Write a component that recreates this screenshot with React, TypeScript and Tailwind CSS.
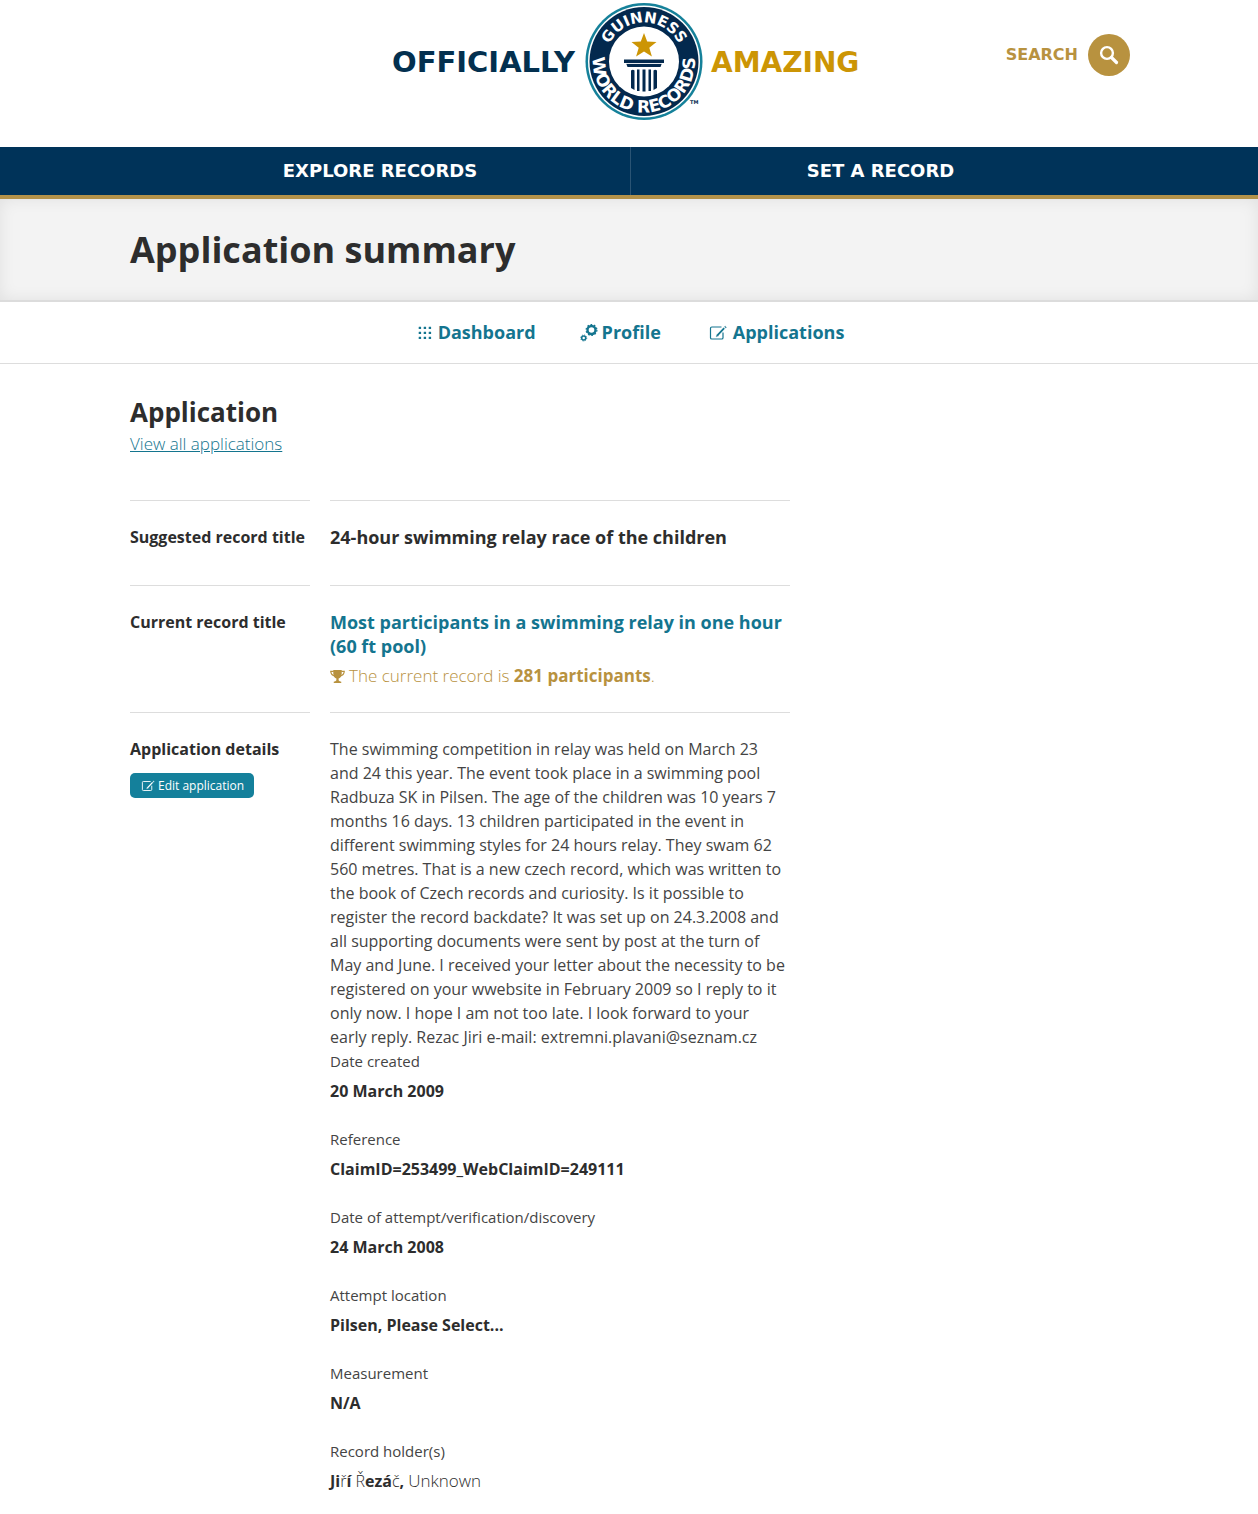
import type { ReactNode } from 'react';

type IconProps = {
  className?: string;
};

type DetailItem = {
  label: string;
  value: ReactNode;
};

const details: DetailItem[] = [
  { label: 'Date created', value: '20 March 2009' },
  { label: 'Reference', value: 'ClaimID=253499_WebClaimID=249111' },
  { label: 'Date of attempt/verification/discovery', value: '24 March 2008' },
  { label: 'Attempt location', value: 'Pilsen, Please Select...' },
  { label: 'Measurement', value: 'N/A' },
  {
    label: 'Record holder(s)',
    value: (
      <>
        Ji<span className="font-light">ř</span>í <span className="font-light">Ř</span>ezá
        <span className="font-light">č</span>, <span className="text-[17px] font-light">Unknown</span>
      </>
    ),
  },
];

function GridIcon({ className }: IconProps) {
  return (
    <svg viewBox="0 0 14 14" className={className} fill="currentColor" aria-hidden="true">
      {[0, 5, 10].map((x) =>
        [0, 5, 10].map((y) => <rect key={`${x}-${y}`} x={x + 0.7} y={y + 0.7} width="2.4" height="2.4" rx="0.3" />)
      )}
    </svg>
  );
}

function CogsIcon({ className }: IconProps) {
  return (
    <svg viewBox="0 0 18 18" className={className} fill="none" stroke="currentColor" aria-hidden="true">
      <circle cx="11.5" cy="6" r="4" strokeWidth="2.4" />
      <circle cx="11.5" cy="6" r="5.4" strokeWidth="1.2" strokeDasharray="1.7 1.7" />
      <circle cx="3.7" cy="14" r="2" strokeWidth="1.5" />
      <circle cx="3.7" cy="14" r="3" strokeWidth="0.9" strokeDasharray="1.18 1.18" />
    </svg>
  );
}

function EditIcon({ className }: IconProps) {
  return (
    <svg viewBox="0 0 18 16" className={className} fill="none" stroke="currentColor" aria-hidden="true">
      <path d="M12.5 2H2.8Q1.5 2 1.5 3.3V12.7Q1.5 14 2.8 14H12.7Q14 14 14 12.7V7.5" strokeWidth="1.2" />
      <path d="M15.2 3.2L8.6 10.2" strokeWidth="1.8" />
      <path d="M7.2 11.8L7.9 9.4L9.5 10.8Z M15.4 1.8L16.8 3.1L17.4 2.2L16.3 1.2Z" fill="currentColor" strokeWidth="0.3" />
    </svg>
  );
}

function TrophyIcon({ className }: IconProps) {
  return (
    <svg viewBox="0 0 16 15" className={className} fill="currentColor" aria-hidden="true">
      <path d="M3.5 0.5H12.5V4.5C12.5 7.5 10.8 9 9.2 9.6V11.5C9.6 12.4 11 12.8 12 13V14.5H4V13C5 12.8 6.4 12.4 6.8 11.5V9.6C5.2 9 3.5 7.5 3.5 4.5Z" />
      <path d="M4 2H0.8Q1 6.5 5.5 7M12 2H15.2Q15 6.5 10.5 7" fill="none" stroke="currentColor" strokeWidth="1.3" />
    </svg>
  );
}

function SearchIcon({ className }: IconProps) {
  return (
    <svg viewBox="0 0 20 20" className={className} fill="none" stroke="currentColor" aria-hidden="true">
      <circle cx="8" cy="8" r="5.9" strokeWidth="2.4" />
      <path d="M12.5 12.5L17.5 17.5" strokeWidth="3.2" strokeLinecap="round" />
    </svg>
  );
}

function Logo() {
  return (
    <svg
      viewBox="4 0 470 120"
      className="w-[470px] max-w-full overflow-visible font-['DejaVu_Sans',sans-serif] font-bold"
      role="img"
      aria-label="Officially Amazing, Guinness World Records">
      <defs>
        <path id="ring-top" d="M214 61.5A39 39 0 0 1 292 61.5" />
        <path id="ring-bottom" d="M205.1 44.1A51 51 0 1 0 300.9 44.1" />
      </defs>
      <text x="1" y="72" fontSize="29" fill="#03304f">OFFICIALLY</text>
      <text x="320" y="72" fontSize="28" fill="#cc9505">AMAZING</text>
      <circle cx="253" cy="61.5" r="58.5" fill="#15819a" />
      <circle cx="253" cy="61.5" r="56" fill="#fff" />
      <circle cx="253" cy="61.5" r="54.5" fill="#03294e" />
      <circle cx="253" cy="61.5" r="35" fill="#fff" />
      <g fill="#fff" textAnchor="middle">
        <text fontSize="15">
          <textPath href="#ring-top" startOffset="50%">GUINNESS</textPath>
        </text>
        <text fontSize="17">
          <textPath href="#ring-bottom" startOffset="50%">WORLD RECORDS</textPath>
        </text>
      </g>
      <path d="M253 33L256.2 41.5L265.5 42L258.3 47.7L260.9 56.5L253 51.5L245.1 56.5L247.7 47.7L240.5 42L249.8 41.5Z" fill="#cc9505" />
      <path d="M233 59.5H273V63H271L269.5 67H236.5L235 63H233Z" fill="#03294e" />
      <path d="M234.5 63.5H271.5" stroke="#fff" strokeWidth="0.9" />
      <path d="M240 70.5Q242 69 243.5 70.5V90L240 88ZM246 69.5H248.5V91H246ZM251.5 69.5H254.5V91.5H251.5ZM257.5 69.5H260V91H257.5ZM262.5 70.5Q264 69 266 70.5V88L262.5 90Z" fill="#03294e" />
      <text x="299" y="104" fontSize="5" fill="#03294e">TM</text>
    </svg>
  );
}

function Row({ title, action, children }: { title: string; action?: ReactNode; children: ReactNode }) {
  return (
    <section className="grid grid-cols-[180px_minmax(0,460px)] gap-5">
      <div className="border-t border-[#ddd] pt-6">
        <h3 className="text-base leading-6 font-bold">{title}</h3>
        {action}
      </div>
      <div className="border-t border-[#ddd] pt-6">{children}</div>
    </section>
  );
}

export default function App() {
  return (
    <div className="bg-white font-['Open_Sans',sans-serif] text-base leading-6 text-[#2d2d2d]">
      <header className="pl-0.5">
        <div className="mx-auto grid h-[147px] max-w-[1000px] grid-cols-[1fr_470px_1fr] items-start">
          <a href="#home" className="col-start-2">
            <Logo />
          </a>
          <button
            type="button"
            className="mt-[34px] flex items-center gap-2.5 justify-self-end font-['DejaVu_Sans',sans-serif] text-base font-bold text-[#b8923f]">
            SEARCH
            <span className="flex size-[42px] items-center justify-center rounded-full bg-[#b8923f] text-white">
              <SearchIcon className="size-5" />
            </span>
          </button>
        </div>
      </header>

      <nav aria-label="Main" className="border-b-4 border-[#b3924a] bg-[#003359] pl-0.5">
        <div className="mx-auto grid h-12 max-w-[1000px] grid-cols-2 text-center font-['DejaVu_Sans',sans-serif] text-lg leading-[48px] font-bold text-white">
          <a href="#explore">EXPLORE RECORDS</a>
          <a href="#set" className="border-l border-[#2a5474]">SET A RECORD</a>
        </div>
      </nav>

      <div className="border-b-2 border-[#dcdcdc] bg-[#f3f3f3] pt-[26px] pb-[25px] pl-0.5 shadow-[inset_0_0_16px_rgba(0,0,0,0.08)]">
        <h1 className="mx-auto max-w-[1000px] text-4xl leading-[50px] font-bold">Application summary</h1>
      </div>

      <nav
        aria-label="Account"
        className="flex justify-center border-b border-[#ddd] py-[18px] pl-1 text-lg leading-[25px] font-bold text-[#14758f]">
        <a href="#dashboard" className="flex items-center gap-1.5">
          <GridIcon className="size-3.5" />
          Dashboard
        </a>
        <a href="#profile" className="ml-11 flex items-center gap-1">
          <CogsIcon className="size-[18px]" />
          Profile
        </a>
        <a href="#applications" className="ml-12 flex items-center gap-1.5">
          <EditIcon className="h-4 w-[18px]" />
          Applications
        </a>
      </nav>

      <main className="pl-0.5">
        <div className="mx-auto max-w-[1000px] pt-8">
          <h2 className="text-[26px] leading-8 font-bold">Application</h2>
          <a href="#all" className="mt-1 inline-block text-[17px] font-light text-[#14758f] underline">
            View all applications
          </a>

          <div className="mt-11">
            <Row title="Suggested record title">
              <p className="pb-9 text-lg leading-6 font-bold">24-hour swimming relay race of the children</p>
            </Row>
            <Row title="Current record title">
              <a href="#record" className="block text-lg leading-6 font-bold text-[#14758f]">
                Most participants in a swimming relay in one hour (60 ft pool)
              </a>
              <p className="mt-1.5 flex items-center gap-1 pb-6 text-[17px] font-light text-[#b8923f]">
                <TrophyIcon className="h-[15px] w-[15px]" />
                <span>
                  The current record is <b className="font-bold">281 participants</b>.
                </span>
              </p>
            </Row>
            <Row
              title="Application details"
              action={
                <button
                  type="button"
                  className="mt-3 flex h-[25px] items-center gap-0.5 rounded-[5px] bg-[#14809b] px-2.5 text-xs text-white">
                  <EditIcon className="h-3 w-4" />
                  Edit application
                </button>
              }>
              <p className="text-[#444]">
                The swimming competition in relay was held on March 23 and 24 this year. The event took place in a
                swimming pool Radbuza SK in Pilsen. The age of the children was 10 years 7 months 16 days. 13 children
                participated in the event in different swimming styles for 24 hours relay. They swam 62 560 metres. That
                is a new czech record, which was written to the book of Czech records and curiosity. Is it possible to
                register the record backdate? It was set up on 24.3.2008 and all supporting documents were sent by post
                at the turn of May and June. I received your letter about the necessity to be registered on your
                wwebsite in February 2009 so I reply to it only now. I hope I am not too late. I look forward to your
                <br />
                early reply. Rezac Jiri e-mail: extremni.plavani@seznam.cz
              </p>
              <dl>
                {details.map((item) => (
                  <div key={item.label} className="pb-6">
                    <dt className="text-[15px] leading-6 text-[#444]">{item.label}</dt>
                    <dd className="mt-1.5 font-bold">{item.value}</dd>
                  </div>
                ))}
              </dl>
            </Row>
          </div>
        </div>
      </main>
    </div>
  );
}
